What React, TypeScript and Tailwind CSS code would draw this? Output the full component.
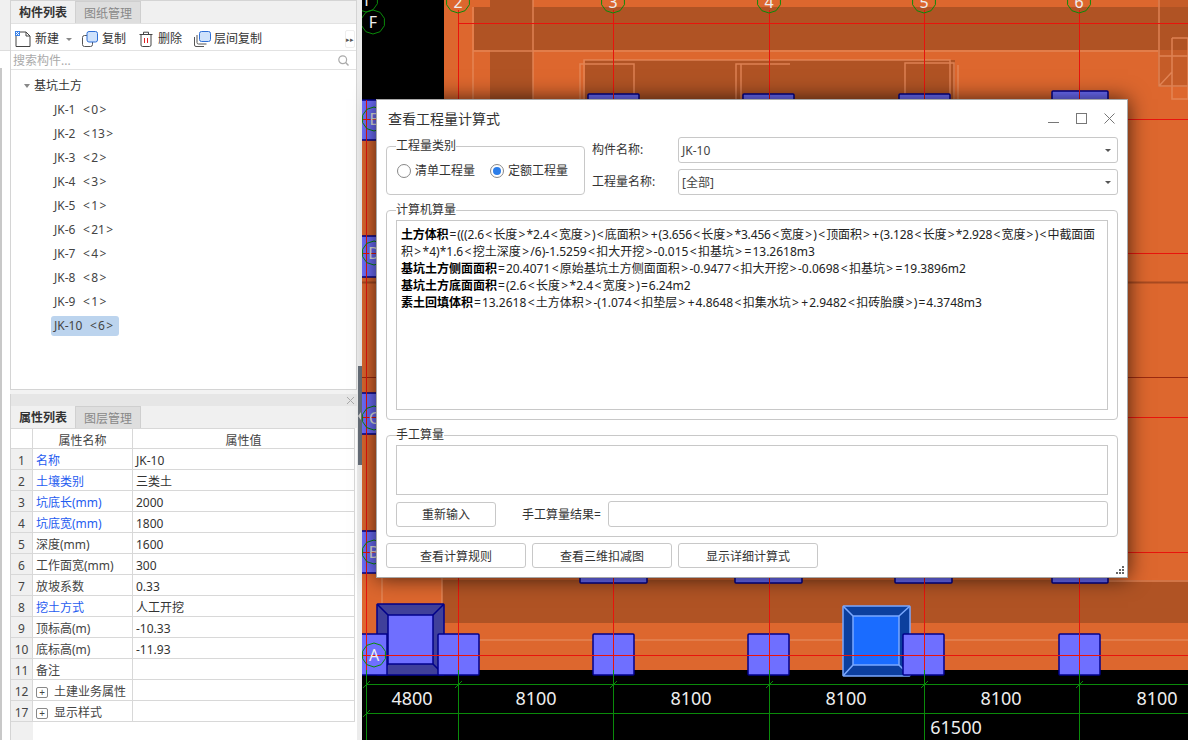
const font = { fontFamily: '"Noto Sans", "Noto Sans CJK SC", sans-serif' }

const jkRows = [
  'JK-1 <0>', 'JK-2 <13>', 'JK-3 <2>', 'JK-4 <3>', 'JK-5 <1>',
  'JK-6 <21>', 'JK-7 <4>', 'JK-8 <8>', 'JK-9 <1>', 'JK-10 <6>',
]

const props = [
  { no: 1, name: '名称', value: 'JK-10', blue: true },
  { no: 2, name: '土壤类别', value: '三类土', blue: true },
  { no: 3, name: '坑底长(mm)', value: '2000', blue: true },
  { no: 4, name: '坑底宽(mm)', value: '1800', blue: true },
  { no: 5, name: '深度(mm)', value: '1600' },
  { no: 6, name: '工作面宽(mm)', value: '300' },
  { no: 7, name: '放坡系数', value: '0.33' },
  { no: 8, name: '挖土方式', value: '人工开挖', blue: true },
  { no: 9, name: '顶标高(m)', value: '-10.33' },
  { no: 10, name: '底标高(m)', value: '-11.93' },
  { no: 11, name: '备注', value: '' },
  { no: 12, name: '土建业务属性', value: '', plus: true },
  { no: 17, name: '显示样式', value: '', plus: true },
]

const formulas = [
  ['土方体积', '=(((2.6<长度>*2.4<宽度>)<底面积>+(3.656<长度>*3.456<宽度>)<顶面积>+(3.128<长度>*2.928<宽度>)<中截面面'],
  ['', '积>*4)*1.6<挖土深度>/6)-1.5259<扣大开挖>-0.015<扣基坑>=13.2618m3'],
  ['基坑土方侧面面积', '=20.4071<原始基坑土方侧面面积>-0.9477<扣大开挖>-0.0698<扣基坑>=19.3896m2'],
  ['基坑土方底面面积', '=(2.6<长度>*2.4<宽度>)=6.24m2'],
  ['素土回填体积', '=13.2618<土方体积>-(1.074<扣垫层>+4.8648<扣集水坑>+2.9482<扣砖胎膜>)=4.3748m3'],
]

// the reference font sets < > + = wider than Noto does, so pad those glyphs
function Spaced({ text }: { text: string }) {
  return (
    <>
      {text.split(/([<>+=])/).map((part, i) =>
        part === '<' || part === '>' ? (
          <span key={i} className="px-[1.35px]">{part}</span>
        ) : part === '+' || part === '=' ? (
          <span key={i} className="px-[1px]">{part}</span>
        ) : (
          part
        ),
      )}
    </>
  )
}

function Tabs({ first, second }: { first: string; second: string }) {
  return (
    <div className="flex h-[22px] shrink-0 bg-[#f0f0f0]">
      <div className="flex w-[65px] items-center justify-center border-r border-[#d0d0d0] pt-[2px] text-xs font-semibold text-[#333]">{first}</div>
      <div className="flex w-[65px] items-center justify-center border-r border-t border-[#cfcfcf] bg-[#dedede] pt-[2px] text-xs text-[#888]">{second}</div>
    </div>
  )
}

function NewIcon() {
  return (
    <svg width="16" height="17" viewBox="0 0 16 17" fill="none">
      <path d="M1 3V15.5H15V5L11 1H4" stroke="#444" strokeWidth="1" />
      <path d="M11 1V5H15" stroke="#444" strokeWidth="1" />
      <rect x="0" y="0" width="5" height="5" fill="#3b82e6" />
      <path d="M1 1H2V2H1ZM3 1H4V2H3ZM2 2H3V3H2ZM1 3H2V4H1ZM3 3H4V4H3Z" fill="#fff" />
    </svg>
  )
}

function CopyIcon() {
  return (
    <svg width="16" height="16" viewBox="0 0 16 16" fill="none">
      <rect x="0.5" y="4.5" width="10" height="11" rx="2" fill="#fff" stroke="#555" />
      <rect x="5" y="0.5" width="10.5" height="10.5" rx="2" fill="#cfe2fb" stroke="#2f6fd6" />
    </svg>
  )
}

function TrashIcon() {
  return (
    <svg width="14" height="16" viewBox="0 0 14 16" fill="none">
      <path d="M0.5 3.5H13.5M4.5 3.5V1.2H9.5V3.5" stroke="#444" />
      <path d="M2 3.5V14a1.5 1.5 0 0 0 1.5 1.5h7A1.5 1.5 0 0 0 12 14V3.5" stroke="#444" />
      <path d="M5.5 7V12M8.5 7V12" stroke="#e02020" />
    </svg>
  )
}

function LayerCopyIcon() {
  return (
    <svg width="17" height="16" viewBox="0 0 17 16" fill="none">
      <path d="M0.5 6V14A1.5 1.5 0 0 0 2 15.5H10" stroke="#555" />
      <path d="M3 4V11.5A1.5 1.5 0 0 0 4.5 13H12.5" stroke="#555" />
      <rect x="5.5" y="0.5" width="11" height="10" rx="2" fill="#cfe2fb" stroke="#2f6fd6" />
    </svg>
  )
}

function Panels() {
  return (
    <div className="flex h-full w-[362px] shrink-0 bg-white" style={font}>
      <div className="flex w-[10px] shrink-0 flex-col">
        <div className="h-[51px] border-b border-[#ddd] bg-[#f0f0f0]" />
        <div className="h-[17px]" />
        <div className="w-[2px] flex-1 bg-[#c8c8c8]" />
      </div>

      <div className="flex w-[347px] shrink-0 flex-col">
        <div className="flex h-[390px] shrink-0 flex-col border border-[#d4d4d4]">
          <Tabs first="构件列表" second="图纸管理" />
          <div className="flex h-[28px] shrink-0 items-center border-y border-[#e2e2e2] pl-[4px] pt-[4px] text-xs text-[#333]">
            <NewIcon />
            <span className="ml-[4px]">新建</span>
            <span className="ml-[7px] h-0 w-0 border-x-[3px] border-t-[3px] border-x-transparent border-t-[#888]" />
            <span className="ml-[10px]"><CopyIcon /></span>
            <span className="ml-[4px]">复制</span>
            <span className="ml-[13px]"><TrashIcon /></span>
            <span className="ml-[5px]">删除</span>
            <span className="ml-[12px]"><LayerCopyIcon /></span>
            <span className="ml-[3px]">层间复制</span>
            <span className="ml-auto mr-[1px] flex h-[18px] w-[10px] items-center justify-center rounded-[2px] border border-[#eee] text-[7px] leading-none text-[#555]">▸▸</span>
          </div>
          <div className="flex h-[19px] shrink-0 items-center justify-between border-b border-[#e2e2e2] pl-[2px] pr-[7px] pt-[1px] text-xs text-[#aaa]">
            <span>搜索构件...</span>
            <svg width="11" height="11" viewBox="0 0 11 11" fill="none">
              <circle cx="4.7" cy="4.7" r="3.9" stroke="#aaa" strokeWidth="1.2" />
              <path d="M7.6 7.6L10.5 10.5" stroke="#aaa" strokeWidth="1.4" />
            </svg>
          </div>
          <div className="flex-1 pt-[4px] text-xs text-[#444]">
            <div className="flex h-[24px] items-center pl-[13px]">
              <span className="h-0 w-0 border-x-[3px] border-t-[4px] border-x-transparent border-t-[#888]" />
              <span className="ml-[4px] text-[#333]">基坑土方</span>
            </div>
            {jkRows.map((row, i) => (
              <div key={row} className="flex h-[24px] items-center pl-[43px]">
                <span className={i === 9 ? '-ml-[3px] flex h-[20px] items-center whitespace-pre rounded-[3px] bg-[#bcd4ee] pl-[3px] pr-[4px]' : 'whitespace-pre'}>
                  <Spaced text={row.replace(' ', '\u00a0\u00a0')} />
                </span>
              </div>
            ))}
          </div>
        </div>

        <div className="h-[4px] shrink-0 bg-[#f2f2f2]" />

        <div className="flex min-h-0 flex-1 flex-col border-l border-[#d4d4d4]">
          <div className="flex h-[12px] shrink-0 items-center justify-end bg-[#e6e6e6] pr-[3px]">
            <svg width="7" height="7" viewBox="0 0 7 7"><path d="M0 0L7 7M7 0L0 7" stroke="#aaa" /></svg>
          </div>
          <Tabs first="属性列表" second="图层管理" />
          <div className="flex-1 text-xs text-[#444]">
            <div className="flex h-[21px] w-[344px] border-b border-t border-[#d8d8d8]">
              <div className="w-[22px] border-r border-[#d8d8d8]" />
              <div className="flex w-[100px] items-center justify-center border-r border-[#d8d8d8] pt-[4px]">属性名称</div>
              <div className="flex flex-1 items-center justify-center border-r border-[#d8d8d8] pt-[4px]">属性值</div>
            </div>
            {props.map(p => (
              <div key={p.no} className="flex h-[21px] w-[344px] border-b border-[#d8d8d8]">
                <div className="flex w-[22px] items-center justify-center border-r border-[#d8d8d8] bg-[#f0f0f0] pt-[4px]">{p.no}</div>
                <div className="flex w-[100px] items-center border-r border-[#d8d8d8] pl-[3px] pt-[4px]">
                  {p.plus && (
                    <span className="mr-[6px] flex h-[11px] w-[12px] items-center justify-center rounded-[2px] border border-[#888] text-[10px] leading-none">+</span>
                  )}
                  <span className={p.blue ? 'whitespace-nowrap text-[#1f5cf0]' : 'whitespace-nowrap'}>{p.name}</span>
                </div>
                <div className="flex flex-1 items-center border-r border-[#d8d8d8] pl-[3px] pt-[4px] text-[#333]">{p.value}</div>
              </div>
            ))}
            <div className="h-[18px] w-[22px] bg-[#f0f0f0]" />
          </div>
        </div>
      </div>

      <div className="relative w-[5px] shrink-0 bg-[#ececec]">
        <div className="absolute left-[1px] top-[366px] flex h-[99px] w-[4px] items-center bg-[#666e78]">
          <span className="h-0 w-0 border-y-[4px] border-r-[3px] border-y-transparent border-r-[#ccc]" />
        </div>
      </div>
    </div>
  )
}

function ring(cx: number, cy: number, r: number) {
  const pts: string[] = []
  for (let i = 0; i < 10; i++) {
    const a = (Math.PI * 2 * i) / 10 + Math.PI / 10
    pts.push(`${(cx + r * Math.cos(a)).toFixed(1)},${(cy + r * Math.sin(a)).toFixed(1)}`)
  }
  return pts.join(' ')
}

function Bevel({ x, y, w, h, ix, iy, iw, ih, fill, face, line }: { x: number; y: number; w: number; h: number; ix: number; iy: number; iw: number; ih: number; fill: string; face: string; line: string }) {
  return (
    <g stroke={line} strokeWidth="1.5">
      <rect x={x} y={y} width={w} height={h} rx="1" fill={face} />
      <rect x={ix} y={iy} width={iw} height={ih} fill={fill} />
      <path d={`M${x} ${y}L${ix} ${iy}M${x + w} ${y}L${ix + iw} ${iy}M${x} ${y + h}L${ix} ${iy + ih}M${x + w} ${y + h}L${ix + iw} ${iy + ih}`} />
    </g>
  )
}

function Drawing() {
  const light = '#dd672e'
  const dark = '#b05324'
  const edge = '#e58a5c'
  const red = '#e8140c'
  const green = '#0a8a0a'
  const grid = [458, 613, 769, 924, 1079]
  const topPillars = [[588, 94, 51], [743, 94, 51], [899, 94, 51], [1052, 91, 56]]
  const lowPillars = [[580, 67], [735, 67], [895, 57], [1052, 56]]
  const basePillars = [438, 593, 748, 903, 1059]
  const sideBlocks = [[100, 40], [236, 41], [393, 41], [531, 42]]
  const labels = [[536, 8100], [691, 8100], [846, 8100], [1001, 8100], [1157, 8100]]

  return (
    <svg className="absolute inset-0 h-full w-full" viewBox="362 0 826 740" style={font}>
      <rect x="362" y="0" width="826" height="740" fill="#000" />
      <rect x="444" y="0" width="744" height="100" fill={light} />
      <rect x="362" y="100" width="826" height="570" fill={light} />

      <rect x="474" y="7" width="714" height="43" fill={dark} />
      <rect x="490" y="0" width="43" height="100" fill={dark} />
      <rect x="585" y="60" width="370" height="40" fill={dark} />
      <rect x="1158" y="0" width="30" height="87" fill={dark} opacity="0.55" />
      <rect x="442" y="580" width="746" height="43" fill={dark} />

      <g stroke={edge} strokeWidth="1.5" fill="none" opacity="0.85">
        <path d="M473 7V100M533 0V100M473 51H1158" />
        <path d="M580 100V64H634V100M584 100V60H950V100" />
        <path d="M736 100V64H790M741 100V64" />
        <path d="M905 100V63H954V100M958 100V65" />
        <path d="M1159 0V86H1188M1159 56H1188M1172 38H1188V99H1172V38M1159 86L1172 72" />
        <path d="M382 578V604M442 578V604M1100 581H1188" />
        <path d="M479 640H593M634 640H748M790 640H843M945 640H1059M1100 640H1188" />
      </g>

      {sideBlocks.map(([y, h]) => (
        <rect key={y} x="360" y={y} width="30" height={h} fill="#6f6fff" stroke="#00008b" strokeWidth="1.5" />
      ))}
      {topPillars.map(([x, y, w]) => (
        <rect key={x} x={x} y={y} width={w} height={20} rx="1" fill="#6f6fff" stroke="#00008b" strokeWidth="1.5" />
      ))}
      {lowPillars.map(([x, w]) => (
        <rect key={x} x={x} y="570" width={w} height="13" rx="1" fill="#6f6fff" stroke="#00008b" strokeWidth="1.5" />
      ))}

      <Bevel x={377} y={604} w={67} h={71} ix={388} iy={615} iw={45} ih={49} fill="#6f6fff" face="#40409a" line="#00008b" />
      <Bevel x={843} y={606} w={67} h={70} ix={853} iy={616} iw={46} ih={49} fill="#1a6cff" face="#0c3f9e" line="#7aa8ff" />
      <rect x="360" y="634" width="27" height="41" fill="#6f6fff" stroke="#00008b" strokeWidth="1.5" />
      {basePillars.map(x => (
        <rect key={x} x={x} y="634" width="41" height="41" rx="1" fill="#6f6fff" stroke="#00008b" strokeWidth="1.5" />
      ))}

      <path d="M362 282.5H376M1128 282.5H1188" stroke="#a84a20" strokeWidth="2" />
      <path d="M362 377.5H376M1128 377.5H1188" stroke="#9c2a10" strokeWidth="1" />

      <g stroke={red} strokeWidth="1">
        <path d="M458.5 23.5H1188M362 119.5H376M1128 119.5H1188M362 253.5H376M1128 253.5H1188M362 417.5H376M1128 417.5H1188M362 552.5H376M1128 552.5H1188M362 655.5H1188" />
        <path d="M366.5 100V670" />
        {grid.map(x => (
          <path key={x} d={`M${x + 0.5} 10V670`} />
        ))}
      </g>

      <g stroke={green} strokeWidth="1">
        <path d="M366 684.5H1188M366 713.5H1188M366.5 670V740" />
        {grid.map(x => (
          <path key={x} d={`M${x + 0.5} 670V740M${x - 3} 688L${x + 4} 681`} />
        ))}
        <path d="M363 688L370 681M363 717L370 710" />
      </g>

      <g fill="none" stroke={green} strokeWidth="1">
        <polygon points={ring(373, 22, 12)} />
        <polygon points={ring(366, 0, 12)} />
        <polygon points={ring(374, 655, 12)} />
        {[119, 253, 418, 552].map(y => <polygon key={y} points={ring(374, y, 12)} />)}
        {grid.map(x => <polygon key={x} points={ring(x, 1, 12)} />)}
      </g>
      <g fill="#eee" fontSize="16" textAnchor="middle">
        <text x="373" y="28">F</text>
        <text x="366" y="6">1</text>
        <text x="374" y="661">A</text>
        <text x="374" y="125">E</text>
        <text x="374" y="259">D</text>
        <text x="374" y="424">C</text>
        <text x="374" y="558">B</text>
        {grid.map((x, i) => <text key={x} x={x} y="8">{i + 2}</text>)}
      </g>
      <g fill="#eee" fontSize="18" textAnchor="middle">
        <text x="412" y="705">4800</text>
        {labels.map(([x, v]) => <text key={x} x={x} y="705">{v}</text>)}
        <text x="956" y="734">61500</text>
      </g>
    </svg>
  )
}

function Select({ value }: { value: string }) {
  return (
    <div className="flex h-[26px] w-[440px] items-center justify-between rounded-[3px] border border-[#c8c8c8] pl-[3px] pr-[6px] pt-[1px] text-xs text-[#444]">
      <span>{value}</span>
      <span className="h-0 w-0 border-x-[3px] border-t-[3px] border-x-transparent border-t-[#555]" />
    </div>
  )
}

function Radio({ checked, label }: { checked?: boolean; label: string }) {
  return (
    <label className="flex items-center gap-[4px]">
      <span className="flex h-[14px] w-[14px] items-center justify-center rounded-full border border-[#888]">
        {checked && <span className="h-[8px] w-[8px] rounded-full bg-[#2b7de9]" />}
      </span>
      <span>{label}</span>
    </label>
  )
}

function Button({ label, width }: { label: string; width: string }) {
  return (
    <button className={`flex h-[25px] items-center justify-center rounded-[3px] border border-[#c8c8c8] bg-white pt-[2px] text-xs text-[#333] ${width}`}>
      {label}
    </button>
  )
}

function Dialog() {
  return (
    <div
      className="absolute left-[14px] top-[99px] flex h-[479px] w-[752px] flex-col border border-[#a8a8a8] bg-white px-[9px] text-xs text-[#333] shadow-[0_0_20px_rgba(0,0,0,0.7)]"
      style={font}
    >
      <div className="flex h-[37px] shrink-0 items-center justify-between pl-[2px] pr-[3px]">
        <span className="text-sm text-[#333]">查看工程量计算式</span>
        <div className="flex items-center gap-[17px]">
          <svg width="11" height="11" viewBox="0 0 11 11"><path d="M0 9.5H11" stroke="#777" /></svg>
          <svg width="11" height="11" viewBox="0 0 11 11" fill="none"><rect x="0.5" y="0.5" width="10" height="10" stroke="#777" /></svg>
          <svg width="11" height="11" viewBox="0 0 11 11"><path d="M0.5 0.5L10.5 10.5M10.5 0.5L0.5 10.5" stroke="#777" /></svg>
        </div>
      </div>

      <div className="flex shrink-0 gap-[7px]">
        <fieldset className="mt-[3px] h-[55px] w-[199px] rounded-[4px] border border-[#c8c8c8] pl-[10px] pt-[11px]">
          <legend className="ml-[-1px] leading-[12px]">工程量类别</legend>
          <div className="flex gap-[15px]">
            <Radio label="清单工程量" />
            <Radio checked label="定额工程量" />
          </div>
        </fieldset>
        <div className="flex flex-col gap-[6px]">
          <div className="flex items-center">
            <span className="w-[86px]">构件名称:</span>
            <Select value="JK-10" />
          </div>
          <div className="flex items-center">
            <span className="w-[86px]">工程量名称:</span>
            <Select value="[全部]" />
          </div>
        </div>
      </div>

      <fieldset className="mt-[9px] h-[216px] shrink-0 rounded-[4px] border border-[#c8c8c8] px-[9px] pb-[9px] pt-[4px]">
        <legend className="leading-[12px]">计算机算量</legend>
        <div className="h-[190px] border border-[#c8c8c8] pl-[4px] pt-[5px] leading-[17px] text-black">
          {formulas.map((f, i) => (
            <div key={i} className={i === 0 ? 'whitespace-nowrap tracking-[-0.15px]' : 'whitespace-nowrap'}>
              {f[0] && <b className="font-bold">{f[0]}</b>}
              <span className="text-[#222]"><Spaced text={f[1]} /></span>
            </div>
          ))}
        </div>
      </fieldset>

      <fieldset className="mt-[9px] h-[108px] shrink-0 rounded-[4px] border border-[#c8c8c8] px-[9px] pt-[4px]">
        <legend className="leading-[12px]">手工算量</legend>
        <div className="h-[50px] border border-[#c8c8c8]" />
        <div className="mt-[6px] flex items-center">
          <Button label="重新输入" width="w-[100px]" />
          <span className="ml-[26px] w-[86px] whitespace-nowrap pt-[1px]">手工算量结果=</span>
          <div className="h-[26px] flex-1 rounded-[3px] border border-[#c8c8c8]" />
        </div>
      </fieldset>

      <div className="mt-[6px] flex shrink-0 gap-[6px]">
        <Button label="查看计算规则" width="w-[140px]" />
        <Button label="查看三维扣减图" width="w-[140px]" />
        <Button label="显示详细计算式" width="w-[140px]" />
      </div>

      <svg className="absolute bottom-[2px] right-[2px]" width="9" height="9" viewBox="0 0 9 9" fill="#666">
        <path d="M6 0H8V2H6ZM3 3H5V5H3ZM6 3H8V5H6ZM0 6H2V8H0ZM3 6H5V8H3ZM6 6H8V8H6Z" />
      </svg>
    </div>
  )
}

export default function App() {
  return (
    <div className="flex h-[740px] w-[1188px] overflow-hidden bg-black">
      <Panels />
      <div className="relative flex-1">
        <Drawing />
        <Dialog />
      </div>
    </div>
  )
}
